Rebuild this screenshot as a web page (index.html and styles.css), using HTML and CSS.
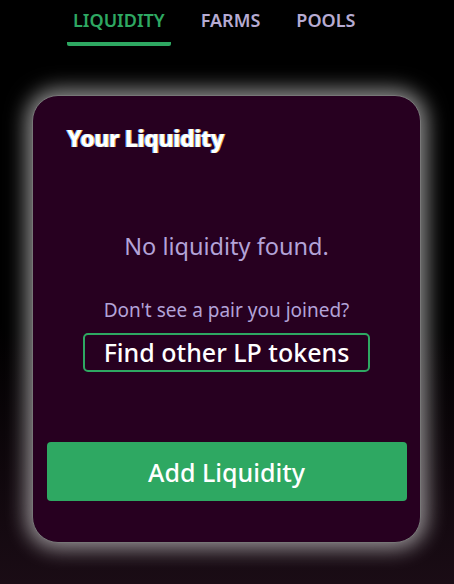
FILE: index.html
```html
<!DOCTYPE html>
<html lang="en">
<head>
  <meta charset="UTF-8" />
  <title>Liquidity</title>
  <link rel="stylesheet" href="styles.css">
</head>
<body>

<nav class="tabs">
  <a class="tab active">LIQUIDITY</a>
  <a class="tab">FARMS</a>
  <a class="tab">POOLS</a>
</nav>

<div class="card">
  <h2 class="card-title">Your Liquidity</h2>

  <p class="empty">No liquidity found.</p>

  <div class="find">
    <p class="hint">Don't see a pair you joined?</p>
    <button class="btn-outline">Find other LP tokens</button>
  </div>

  <button class="btn-add">Add Liquidity</button>
</div>

</body>
</html>
```

FILE: styles.css
```css
html, body { height: 100%; }
body {
  margin: 0;
  font-family: 'Noto Sans', sans-serif;
  background: linear-gradient(180deg, #000 0%, #000 55%, #1a0c15 100%);
  color: #fff;
}

.tabs {
  display: flex;
  gap: 24px;
  padding: 8px 0 0 67px;
}
.tab {
  padding: 0 6px 10px;
  font-size: 18px; font-weight: 600;
  color: #b6abd2;
  border-bottom: 4px solid transparent;
  border-radius: 2px;
  cursor: pointer;
}
.tab.active { color: #2ea862; border-color: #2ea862; }

.card {
  width: 389px;
  height: 448px;
  margin: 49px 0 0 32px;
  box-sizing: border-box;
  padding: 26px 14px 41px;
  background: #270020;
  border: 1px solid #777;
  border-radius: 26px;
  box-shadow: 0 0 20px 6px rgba(255,255,255,0.55);
  display: flex;
  flex-direction: column;
  align-items: center;
}

.card-title {
  align-self: flex-start;
  margin: 0 0 0 20px;
  font-size: 23px; font-weight: 800;
  letter-spacing: -0.4px;
  text-shadow: -1px 0 0 #6fb3ff, 1px 0 0 #e0a040;
}

.empty {
  margin: 76px 0 0;
  font-size: 23.5px;
  color: #b3a3d8;
}

.find { display: flex; flex-direction: column; align-items: center; }
.hint {
  margin: 35px 0 10px;
  font-size: 19px;
  color: #b3a3d8;
}

.btn-outline {
  width: 287px; height: 39px;
  padding: 0;
  background: transparent;
  border: 2px solid #2ea862;
  border-radius: 5px;
  font-family: inherit; font-size: 25px; font-weight: 500;
  line-height: 35px;
  color: #fff;
  cursor: pointer;
}

.btn-add {
  margin-top: auto;
  width: 360px; height: 59px;
  background: #2ea862;
  border: none;
  border-radius: 4px;
  font-family: inherit; font-size: 25px; font-weight: 500;
  color: #fff;
  cursor: pointer;
}
```
